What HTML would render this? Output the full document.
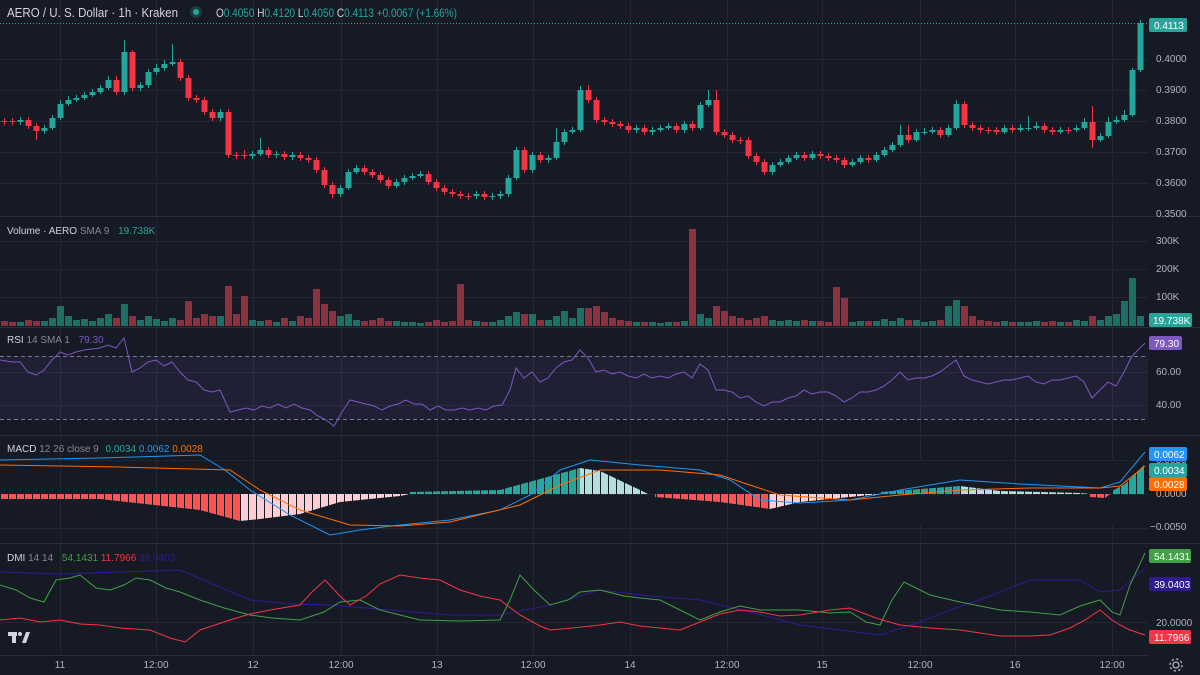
<!DOCTYPE html>
<html><head><meta charset="utf-8"><style>
html,body{margin:0;padding:0;background:#161a25;width:1200px;height:675px;overflow:hidden;font-family:"Liberation Sans",sans-serif}
svg{display:block}
</style></head><body>
<svg width="1200" height="675" xmlns="http://www.w3.org/2000/svg" font-family="Liberation Sans, sans-serif">
<defs>
<pattern id="gap" x="0" y="0" width="8" height="10" patternUnits="userSpaceOnUse"><rect x="0" y="0" width="1" height="10" fill="#161a25"/></pattern>
</defs>
<rect width="1200" height="675" fill="#161a25"/>
<g stroke="#232734" stroke-width="1">
<path d="M60.5 0V655M156.5 0V655M253.5 0V655M341.5 0V655M437.5 0V655M533.5 0V655M630.5 0V655M727.5 0V655M822.5 0V655M920.5 0V655M1015.5 0V655M1112.5 0V655"/>
<path d="M0 59.5H1148M0 90.5H1148M0 121.5H1148M0 152.5H1148M0 183.5H1148M0 241.5H1148M0 269.5H1148M0 297.5H1148M0 372.5H1148M0 405.5H1148M0 460.5H1148M0 494.5H1148M0 528.5H1148M0 622.5H1148"/>
</g>
<line x1="0" y1="23.5" x2="1148" y2="23.5" stroke="#26a69a" stroke-dasharray="1 2"/>

<!-- candles green -->
<g stroke="#26a69a" fill="none">
<path stroke-width="1" d="M20.5 117V125M44.5 125V134M52.5 115V130M60.5 100V120M68.5 96V106M76.5 95V102M84.5 92V100M92.5 89V97M100.5 85V94M108.5 76V90M124.5 40V95M140.5 82V91M148.5 69V88M156.5 64V75M164.5 60V71M172.5 44V66M220.5 109V121M252.5 151V159M260.5 138V156M276.5 151V158M292.5 152V160M340.5 185V197M348.5 169V190M356.5 165V174M396.5 179V188M404.5 175V185M412.5 173V180M420.5 171V178M476.5 191V199M492.5 193V200M500.5 191V199M508.5 175V197M516.5 147V180M532.5 152V173M548.5 155V163M556.5 128V160M564.5 129V145M572.5 127V134M580.5 86V132M636.5 125V133M652.5 127V135M660.5 125V132M668.5 123V130M684.5 121V133M700.5 102V130M708.5 90V107M772.5 162V175M780.5 159V167M788.5 155V164M796.5 152V160M812.5 151V160M852.5 159V167M860.5 155V164M876.5 152V162M884.5 147V157M892.5 142V152M900.5 125V147M916.5 129V142M924.5 128V135M932.5 127V134M948.5 125V137M956.5 100V130M1004.5 125V134M1020.5 124V132M1028.5 116V131M1036.5 122V130M1060.5 127V134M1076.5 125V132M1084.5 118V130M1100.5 133V142M1108.5 117V138M1116.5 116V124M1124.5 110V122M1132.5 68V117M1140.5 20V72"/>
<path stroke-width="6" d="M20.5 120V122M44.5 128V131M52.5 118V128M60.5 104V118M68.5 100V104M76.5 98V100M84.5 95V98M92.5 92V95M100.5 88V92M108.5 80V88M124.5 52V92M140.5 85V88M148.5 72V85M156.5 68V72M164.5 64V68M172.5 62V64M220.5 112V118M252.5 154V156M260.5 150V154M276.5 154V155M292.5 155V157M340.5 188V194M348.5 172V188M356.5 168V172M396.5 182V186M404.5 178V182M412.5 176V178M420.5 174V176M476.5 194V196M492.5 196V197M500.5 194V196M508.5 178V194M516.5 150V178M532.5 155V170M548.5 158V160M556.5 142V158M564.5 132V142M572.5 130V132M580.5 90V130M636.5 128V130M652.5 130V132M660.5 128V130M668.5 126V128M684.5 124V130M700.5 105V128M708.5 100V105M772.5 165V172M780.5 162V165M788.5 158V162M796.5 155V158M812.5 154V158M852.5 162V165M860.5 158V162M876.5 155V160M884.5 150V155M892.5 145V150M900.5 135V145M916.5 132V140M924.5 132V133M932.5 130V132M948.5 128V135M956.5 104V128M1004.5 128V132M1020.5 128V130M1028.5 128V129M1036.5 126V128M1060.5 130V132M1076.5 128V130M1084.5 122V128M1100.5 136V140M1108.5 122V136M1116.5 120V122M1124.5 115V120M1132.5 70V115M1140.5 23V70"/>
</g>
<!-- candles red -->
<g stroke="#f23645" fill="none">
<path stroke-width="1" d="M4.5 118V125M12.5 118V125M28.5 117V129M36.5 123V140M116.5 76V95M132.5 50V91M180.5 59V81M188.5 75V101M196.5 95V103M204.5 97V115M212.5 109V121M228.5 109V158M236.5 152V159M244.5 150V159M268.5 147V158M284.5 151V160M300.5 152V161M308.5 155V163M316.5 157V173M324.5 167V188M332.5 182V198M364.5 165V175M372.5 169V178M380.5 172V183M388.5 177V189M428.5 171V185M436.5 179V191M444.5 185V195M452.5 189V197M460.5 191V199M468.5 193V200M484.5 191V200M524.5 147V173M540.5 152V163M588.5 85V103M596.5 97V123M604.5 117V125M612.5 119V127M620.5 121V129M628.5 123V133M644.5 125V135M676.5 123V133M692.5 121V131M716.5 90V135M724.5 129V138M732.5 132V143M740.5 137V144M748.5 137V159M756.5 153V165M764.5 159V175M804.5 152V161M820.5 151V159M828.5 153V161M836.5 155V163M844.5 157V168M868.5 155V163M908.5 125V143M940.5 127V138M964.5 101V128M972.5 122V131M980.5 125V133M988.5 127V134M996.5 127V135M1012.5 125V133M1044.5 123V133M1052.5 127V135M1068.5 127V134M1092.5 106V148"/>
<path stroke-width="6" d="M4.5 121V122M12.5 121V122M28.5 120V126M36.5 126V131M116.5 80V92M132.5 52V88M180.5 62V78M188.5 78V98M196.5 98V100M204.5 100V112M212.5 112V118M228.5 112V155M236.5 155V156M244.5 155V156M268.5 150V155M284.5 154V157M300.5 155V158M308.5 158V160M316.5 160V170M324.5 170V185M332.5 185V194M364.5 168V172M372.5 172V175M380.5 175V180M388.5 180V186M428.5 174V182M436.5 182V188M444.5 188V192M452.5 192V194M460.5 194V196M468.5 196V197M484.5 194V197M524.5 150V170M540.5 155V160M588.5 90V100M596.5 100V120M604.5 120V122M612.5 122V124M620.5 124V126M628.5 126V130M644.5 128V132M676.5 126V130M692.5 124V128M716.5 100V132M724.5 132V135M732.5 135V140M740.5 140V141M748.5 140V156M756.5 156V162M764.5 162V172M804.5 155V158M820.5 154V156M828.5 156V158M836.5 158V160M844.5 160V165M868.5 158V160M908.5 135V140M940.5 130V135M964.5 104V125M972.5 125V128M980.5 128V130M988.5 130V131M996.5 130V132M1012.5 128V130M1044.5 126V130M1052.5 130V132M1068.5 130V131M1092.5 122V140"/>
</g>

<!-- volume -->
<path stroke="#1f6e63" stroke-width="7" fill="none" d="M20.5 326v-4M44.5 326v-5M52.5 326v-8M60.5 326v-20M68.5 326v-10M76.5 326v-6M84.5 326v-7M92.5 326v-5M100.5 326v-8M108.5 326v-12M124.5 326v-22M140.5 326v-6M148.5 326v-10M156.5 326v-7M164.5 326v-5M172.5 326v-8M220.5 326v-10M252.5 326v-6M260.5 326v-5M276.5 326v-4M292.5 326v-5M340.5 326v-10M348.5 326v-12M356.5 326v-6M396.5 326v-5M404.5 326v-4M412.5 326v-4M420.5 326v-3M476.5 326v-5M492.5 326v-4M500.5 326v-6M508.5 326v-10M516.5 326v-14M532.5 326v-12M548.5 326v-6M556.5 326v-10M564.5 326v-15M572.5 326v-8M580.5 326v-18M636.5 326v-4M652.5 326v-4M660.5 326v-3M668.5 326v-4M684.5 326v-5M700.5 326v-12M708.5 326v-8M772.5 326v-6M780.5 326v-5M788.5 326v-6M796.5 326v-5M812.5 326v-5M852.5 326v-4M860.5 326v-5M876.5 326v-5M884.5 326v-7M892.5 326v-5M900.5 326v-8M916.5 326v-6M924.5 326v-4M932.5 326v-5M948.5 326v-20M956.5 326v-26M1004.5 326v-5M1020.5 326v-4M1028.5 326v-4M1036.5 326v-5M1060.5 326v-4M1076.5 326v-6M1084.5 326v-5M1100.5 326v-6M1108.5 326v-10M1116.5 326v-12M1124.5 326v-25M1132.5 326v-48M1140.5 326v-10"/>
<path stroke="#8a3340" stroke-width="7" fill="none" d="M4.5 326v-5M12.5 326v-4M28.5 326v-6M36.5 326v-5M116.5 326v-8M132.5 326v-10M180.5 326v-6M188.5 326v-25M196.5 326v-8M204.5 326v-12M212.5 326v-10M228.5 326v-40M236.5 326v-12M244.5 326v-30M268.5 326v-6M284.5 326v-8M300.5 326v-10M308.5 326v-8M316.5 326v-37M324.5 326v-22M332.5 326v-15M364.5 326v-5M372.5 326v-6M380.5 326v-8M388.5 326v-5M428.5 326v-4M436.5 326v-6M444.5 326v-4M452.5 326v-5M460.5 326v-42M468.5 326v-6M484.5 326v-4M524.5 326v-12M540.5 326v-6M588.5 326v-18M596.5 326v-20M604.5 326v-14M612.5 326v-8M620.5 326v-6M628.5 326v-5M644.5 326v-4M676.5 326v-4M692.5 326v-97M716.5 326v-20M724.5 326v-15M732.5 326v-10M740.5 326v-8M748.5 326v-6M756.5 326v-8M764.5 326v-10M804.5 326v-6M820.5 326v-5M828.5 326v-4M836.5 326v-39M844.5 326v-28M868.5 326v-5M908.5 326v-6M940.5 326v-6M964.5 326v-20M972.5 326v-10M980.5 326v-6M988.5 326v-5M996.5 326v-4M1012.5 326v-4M1044.5 326v-4M1052.5 326v-5M1068.5 326v-4M1092.5 326v-10"/>

<!-- RSI -->
<rect x="0" y="356" width="1148" height="63" fill="rgba(126,87,194,0.1)"/>
<line x1="0" y1="356.5" x2="1148" y2="356.5" stroke="#787b86" stroke-dasharray="4 3"/>
<line x1="0" y1="419.5" x2="1148" y2="419.5" stroke="#787b86" stroke-dasharray="4 3"/>
<polyline fill="none" stroke="#7e57c2" points="0,360 12,362 20,362 28,372 36,375 44,370 52,360 60,352 68,355 76,352 84,350 100,348 108,345 116,348 124,338 132,372 140,368 148,362 156,360 164,366 172,362 180,372 188,380 196,382 204,390 212,392 220,390 230,412 238,410 246,408 254,410 262,406 270,408 278,404 286,408 294,404 302,408 310,410 318,416 326,420 334,426 342,412 350,400 358,402 366,404 374,406 382,410 390,406 398,404 406,400 414,404 422,404 430,410 438,406 446,410 454,410 462,408 470,410 478,408 486,410 494,406 502,405 510,390 516,368 524,378 532,372 540,382 548,378 556,368 564,362 572,360 580,350 588,358 596,372 604,370 612,374 620,372 628,376 636,378 644,374 652,378 660,376 668,378 676,374 684,372 692,378 700,364 708,370 716,390 724,390 732,392 740,398 748,396 756,402 764,406 772,402 780,402 788,398 796,396 804,390 812,394 820,392 828,392 836,396 844,402 852,398 860,392 868,392 876,390 884,386 892,380 900,372 908,380 916,378 924,378 932,376 940,372 948,366 956,360 964,376 972,380 980,382 988,384 996,382 1004,380 1012,380 1020,378 1028,376 1036,382 1044,384 1052,380 1060,380 1068,378 1076,376 1084,382 1092,398 1100,390 1108,382 1116,386 1124,372 1132,356 1140,348 1145,343"/>

<!-- MACD histogram -->
<g>
<polygon fill="#ff5252" points="0,494 0,499 100,499 200,510 240,521 240,494"/>
<polygon fill="#ffcdd2" points="240,494 240,521 260,519 300,514 340,502 400,496 410,494"/>
<polygon fill="#26a69a" points="410,494 410,492 500,490 540,479 580,468 580,494"/>
<polygon fill="#b2dfdb" points="580,494 580,468 600,471 640,490 648,494"/>
<polygon fill="#ff5252" points="655,494 655,497 720,502 770,509 770,494"/>
<polygon fill="#ffcdd2" points="770,494 770,509 800,502 860,496 880,494"/>
<polygon fill="#26a69a" points="880,494 880,492 960,486 960,494"/>
<polygon fill="#b2dfdb" points="960,494 960,486 1000,491 1080,493 1090,494"/>
<polygon fill="#ff5252" points="1090,494 1090,497 1105,498 1110,494"/>
<polygon fill="#26a69a" points="1112,494 1112,491 1125,484 1145,464 1145,494"/>
<rect x="0" y="460" width="1148" height="65" fill="url(#gap)"/>
</g>
<polyline fill="none" stroke="#2196f3" points="0,460 100,458 200,455 225,470 250,490 290,515 330,535 360,530 400,525 450,520 500,510 530,495 560,470 590,460 640,465 700,470 730,480 760,500 800,503 850,500 900,490 960,480 1020,484 1100,488 1120,482 1145,452"/>
<polyline fill="none" stroke="#ff6d00" points="0,465 120,467 230,470 260,490 300,510 350,525 400,526 450,522 520,505 560,485 600,470 660,470 720,475 750,485 780,495 850,500 900,495 960,490 1030,488 1100,488 1120,486 1145,466"/>

<!-- DMI -->
<polyline fill="none" stroke="#311b92" points="0,572 60,574 120,572 180,570 215,585 250,600 290,604 330,605 390,610 450,615 500,615 550,605 600,590 650,596 700,600 750,612 800,625 840,630 880,635 920,622 950,610 990,596 1030,580 1080,580 1100,592 1120,590 1145,568"/>
<polyline fill="none" stroke="#43a047" points="0,585 16,590 30,598 44,602 56,580 70,578 80,575 96,588 110,590 124,585 136,578 150,580 166,588 180,592 200,600 224,608 250,615 272,618 300,620 324,612 340,602 360,600 380,610 400,615 420,620 460,621 500,620 510,600 520,575 534,590 550,605 568,600 580,592 600,590 624,596 640,598 660,600 680,610 700,620 720,612 740,606 760,610 800,610 830,613 850,612 866,622 880,625 892,600 904,582 916,588 930,595 960,602 1000,610 1030,612 1060,615 1080,606 1100,600 1112,612 1120,615 1130,585 1145,553"/>
<polyline fill="none" stroke="#f23645" points="0,620 20,618 40,622 60,620 80,624 100,625 120,628 150,630 170,638 185,642 200,630 215,625 230,620 250,614 270,610 300,605 312,592 325,580 340,596 350,605 366,596 380,584 400,575 420,578 440,580 460,590 480,596 500,600 520,615 540,626 550,630 572,628 600,625 620,622 640,626 660,628 680,630 700,622 720,614 740,610 760,612 780,616 800,615 830,610 850,608 876,618 900,625 930,628 960,630 1000,636 1030,636 1050,635 1070,628 1085,620 1100,610 1112,620 1120,625 1130,630 1145,635"/>

<!-- pane separators -->
<g stroke="#2a2e39" stroke-width="1">
<line x1="0" y1="216.5" x2="1200" y2="216.5"/>
<line x1="0" y1="327.5" x2="1200" y2="327.5"/>
<line x1="0" y1="435.5" x2="1200" y2="435.5"/>
<line x1="0" y1="543.5" x2="1200" y2="543.5"/>
<line x1="0" y1="655.5" x2="1148" y2="655.5"/>
</g>

<g font-size="13" fill="#d1d4dc">
<text x="7" y="17" textLength="171" lengthAdjust="spacingAndGlyphs">AERO / U. S. Dollar · 1h · Kraken</text>
<circle cx="196" cy="12" r="6" fill="#1e3a3a"/><circle cx="196" cy="12" r="3" fill="#26a69a"/>
<text x="216" y="17" font-size="12" textLength="241" lengthAdjust="spacingAndGlyphs">O<tspan fill="#26a69a">0.4050</tspan> H<tspan fill="#26a69a">0.4120</tspan> L<tspan fill="#26a69a">0.4050</tspan> C<tspan fill="#26a69a">0.4113 +0.0067 (+1.66%)</tspan></text>
</g>
<g font-size="10" fill="#d1d4dc">
<text x="7" y="234">Volume · AERO <tspan fill="#868993">SMA 9</tspan> <tspan dx="6" fill="#26a69a">19.738K</tspan></text>
<text x="7" y="343">RSI <tspan fill="#868993">14 SMA 1</tspan> <tspan dx="6" fill="#7e57c2">79.30</tspan></text>
<text x="7" y="452">MACD <tspan fill="#868993">12 26 close 9</tspan> <tspan dx="4" fill="#26a69a">0.0034</tspan> <tspan fill="#2196f3">0.0062</tspan> <tspan fill="#ff6d00">0.0028</tspan></text>
<text x="7" y="561">DMI <tspan fill="#868993">14 14</tspan> <tspan dx="6" fill="#43a047">54.1431</tspan> <tspan fill="#f23645">11.7966</tspan> <tspan fill="#311b92">39.0403</tspan></text>
</g>
<g font-size="10" fill="#b2b5be">
<text x="1156" y="62">0.4000</text><text x="1156" y="93">0.3900</text><text x="1156" y="124">0.3800</text><text x="1156" y="155">0.3700</text><text x="1156" y="186">0.3600</text><text x="1156" y="217">0.3500</text>
<text x="1156" y="244">300K</text><text x="1156" y="272">200K</text><text x="1156" y="300">100K</text>
<text x="1156" y="375">60.00</text><text x="1156" y="408">40.00</text>
<text x="1156" y="463">0.0050</text><text x="1156" y="497">0.0000</text><text x="1150" y="530">−0.0050</text>
<text x="1156" y="626">20.0000</text>
</g>
<g font-size="10" fill="#fff">
<rect x="1149" y="18" width="38" height="14" rx="2" fill="#26a69a"/><text x="1154" y="29">0.4113</text>
<rect x="1149" y="313" width="43" height="14" rx="2" fill="#26a69a"/><text x="1153" y="324">19.738K</text>
<rect x="1149" y="336" width="33" height="14" rx="2" fill="#7e57c2"/><text x="1154" y="347">79.30</text>
<rect x="1149" y="447" width="38" height="14" rx="2" fill="#2196f3"/><text x="1154" y="458">0.0062</text>
<rect x="1149" y="463" width="38" height="14" rx="2" fill="#26a69a"/><text x="1154" y="474">0.0034</text>
<rect x="1149" y="477" width="38" height="14" rx="2" fill="#ff6d00"/><text x="1154" y="488">0.0028</text>
<rect x="1149" y="549" width="42" height="14" rx="2" fill="#43a047"/><text x="1154" y="560">54.1431</text>
<rect x="1149" y="577" width="42" height="14" rx="2" fill="#311b92"/><text x="1154" y="588">39.0403</text>
<rect x="1149" y="630" width="42" height="14" rx="2" fill="#f23645"/><text x="1154" y="641">11.7966</text>
</g>
<g font-size="10" fill="#b2b5be" text-anchor="middle">
<text x="60" y="668">11</text><text x="156" y="668">12:00</text><text x="253" y="668">12</text><text x="341" y="668">12:00</text><text x="437" y="668">13</text><text x="533" y="668">12:00</text><text x="630" y="668">14</text><text x="727" y="668">12:00</text><text x="822" y="668">15</text><text x="920" y="668">12:00</text><text x="1015" y="668">16</text><text x="1112" y="668">12:00</text>
</g>
<g transform="translate(8,630)" fill="#d1d4dc">
<rect x="0" y="2" width="9" height="4"/><rect x="4" y="2" width="4" height="11"/>
<circle cx="12" cy="4" r="2"/><path d="M14 13 L18 2 L22 2 L18 13 Z"/>
</g>
<g transform="translate(1176,665)" stroke="#b2b5be" fill="none" stroke-width="1.3">
<circle r="3"/><circle r="6" stroke-dasharray="2.4 2.3"/>
</g>
</svg>
</body></html>
